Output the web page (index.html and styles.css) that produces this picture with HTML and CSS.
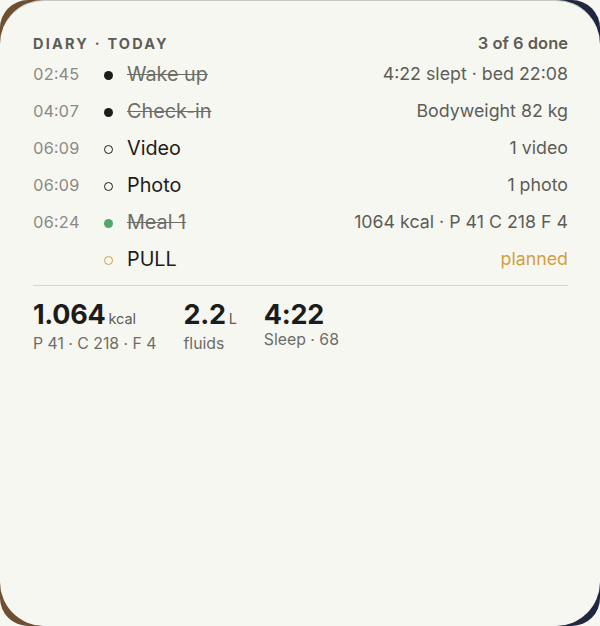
FILE: index.html
```html
<!DOCTYPE html>
<html>
<head>
<meta charset="utf-8">
<link rel="stylesheet" href="styles.css">
</head>
<body>
<div class="frame">
  <div class="card">
    <div class="head">
      <span class="title">DIARY · TODAY</span>
      <span class="count">3 of 6 done</span>
    </div>
    <div class="rows">
      <div class="row">
        <span class="time">02:45</span>
        <span class="dot filled"></span>
        <span class="name done">Wake up</span>
        <span class="meta">4:22 slept · bed 22:08</span>
      </div>
      <div class="row">
        <span class="time">04:07</span>
        <span class="dot filled"></span>
        <span class="name done">Check-in</span>
        <span class="meta">Bodyweight 82 kg</span>
      </div>
      <div class="row">
        <span class="time">06:09</span>
        <span class="dot open"></span>
        <span class="name">Video</span>
        <span class="meta">1 video</span>
      </div>
      <div class="row">
        <span class="time">06:09</span>
        <span class="dot open"></span>
        <span class="name">Photo</span>
        <span class="meta">1 photo</span>
      </div>
      <div class="row">
        <span class="time">06:24</span>
        <span class="dot green"></span>
        <span class="name done">Meal 1</span>
        <span class="meta">1064 kcal · P 41 C 218 F 4</span>
      </div>
      <div class="row">
        <span class="time"></span>
        <span class="dot amber"></span>
        <span class="name">PULL</span>
        <span class="meta planned">planned</span>
      </div>
    </div>
    <div class="divider"></div>
    <div class="stats">
      <div class="stat">
        <div class="big">1.064<span class="unit">kcal</span></div>
        <div class="sub">P 41 · C 218 · F 4</div>
      </div>
      <div class="stat">
        <div class="big">2.2<span class="unit">L</span></div>
        <div class="sub">fluids</div>
      </div>
      <div class="stat">
        <div class="big">4:22</div>
        <div class="sub">Sleep · 68</div>
      </div>
    </div>
  </div>
</div>
</body>
</html>
```
FILE: styles.css
```css
html, body {
  margin: 0;
  padding: 0;
  background: #f7f7f2;
}
body {
  font-family: Inter, "Noto Sans", sans-serif;
  width: 600px;
  height: 626px;
  overflow: hidden;
}
.frame {
  width: 600px;
  height: 626px;
  border-radius: 28px;
  background: linear-gradient(90deg, #6e5032 0%, #4a4038 50%, #1e2640 100%);
  display: flex;
}
.card {
  flex: 1;
  border-radius: 44px;
  background: #f7f7f2;
  padding: 33px 32px 0 33px;
  border-top: 1px solid #c8c8c4;
  box-sizing: border-box;
}
.head {
  display: flex;
  justify-content: space-between;
  align-items: center;
  height: 20px;
  margin-top: -1px;
  margin-bottom: 2px;
}
.title {
  font-size: 14.5px;
  font-weight: 700;
  letter-spacing: 2.2px;
  color: #5d5d58;
}
.count {
  font-size: 16.5px;
  font-weight: 600;
  color: #5d5d58;
}
.rows {
  display: flex;
  flex-direction: column;
}
.row {
  height: 37px;
  display: flex;
  align-items: center;
}
.time {
  width: 70px;
  font-size: 16.3px;
  color: #8a8a85;
  font-variant-numeric: tabular-nums;
}
.dot {
  width: 9px;
  height: 9px;
  border-radius: 50%;
  box-sizing: border-box;
  margin-top: 4px;
  margin-left: 1px;
  margin-right: 14px;
  flex: none;
}
.dot.filled { background: #1c1c1a; }
.dot.open { border: 1.6px solid #1c1c1a; }
.dot.green { background: #4fa867; }
.dot.amber { border: 1.6px solid #d19e45; }
.name {
  font-size: 19.8px;
  color: #1c1c1a;
  flex: 1;
}
.name.done {
  color: #6d6d68;
  text-decoration: line-through;
  text-decoration-thickness: 1.3px;
}
.meta {
  font-size: 17.8px;
  color: #5d5d58;
}
.meta.planned { color: #d1a040; }
.divider {
  height: 1px;
  background: #d6d6d0;
  margin-top: 8px;
}
.stats {
  display: flex;
  gap: 27px;
  margin-top: 14px;
}
.big {
  font-size: 27px;
  font-weight: 700;
  line-height: 30px;
  color: #1c1c1a;
  letter-spacing: -0.3px;
}
.unit {
  font-size: 14.5px;
  font-weight: 400;
  color: #5d5d58;
  margin-left: 3px;
  letter-spacing: 0;
}
.sub {
  font-size: 15.8px;
  line-height: 20px;
  color: #6d6d68;
}
```
